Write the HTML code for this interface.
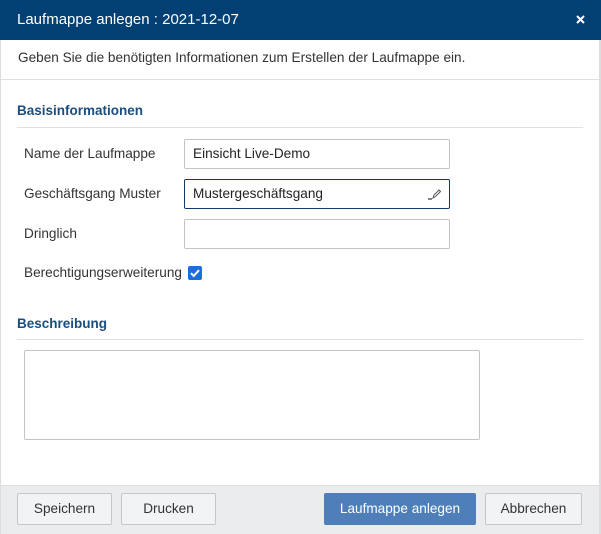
<!DOCTYPE html>
<html><head><meta charset="utf-8"><style>
*{box-sizing:border-box;margin:0;padding:0}
body{width:601px;height:534px;position:relative;background:#fff;font-family:"Liberation Sans",sans-serif;color:#333;overflow:hidden;font-size:13.6px}
.abs{position:absolute}
.hdr{left:0;top:0;width:601px;height:40px;background:#023f73;color:#fff}
.frame{left:0;top:40px;width:601px;height:494px;border-left:1px solid #ddd;border-right:2px solid #ddd}
.lbl{left:24px;line-height:18px}
.inp{left:184px;width:266px;height:30px;border:1px solid #c4c4c4;border-radius:2px;padding-left:8px;line-height:28px;color:#222}
.sec{left:17px;color:#1b4d7e;font-weight:bold;font-size:13.5px}
.line{height:1px;background:#e0e0e0}
.btn{top:493px;height:32px;border:1px solid #c6c6c6;border-radius:2px;background:#f2f3f5;text-align:center;line-height:30px;color:#333}
</style></head><body>
<div class="abs frame"></div>
<div class="abs hdr"><div class="abs" style="left:17px;top:11px;font-size:15px">Laufmappe anlegen : 2021-12-07</div><svg class="abs" style="left:576px;top:15px" width="9" height="9" viewBox="0 0 9 9"><path d="M1 1l7 7M8 1L1 8" stroke="#fff" stroke-width="2"/></svg></div>
<div class="abs" style="left:18px;top:50px">Geben Sie die benötigten Informationen zum Erstellen der Laufmappe ein.</div>
<div class="abs line" style="left:1px;top:79px;width:598px"></div>
<div class="abs sec" style="top:103px">Basisinformationen</div>
<div class="abs line" style="left:17px;top:127px;width:566px"></div>
<div class="abs lbl" style="top:145px">Name der Laufmappe</div>
<div class="abs lbl" style="top:185px">Geschäftsgang Muster</div>
<div class="abs lbl" style="top:225px">Dringlich</div>
<div class="abs lbl" style="top:264px">Berechtigungserweiterung</div>
<div class="abs inp" style="top:139px">Einsicht Live-Demo</div>
<div class="abs inp" style="top:179px;border-color:#0b3c6c">Mustergeschäftsgang<svg class="abs" style="right:8px;top:8px" width="14" height="12" viewBox="0 0 14 12"><path d="M1 11h4" stroke="#333" stroke-width="1.2"/><path d="M6 10l1-3 5-5 1.5 1.5-5 5z" fill="none" stroke="#555" stroke-width="1"/></svg></div>
<div class="abs inp" style="top:219px"></div>
<div class="abs" style="left:188px;top:266px;width:14px;height:14px;background:#1a6fd8;border-radius:2px"><svg width="14" height="14"><path d="M3 7.2l2.7 2.7L11 4.2" fill="none" stroke="#fff" stroke-width="2"/></svg></div>
<div class="abs sec" style="top:316px">Beschreibung</div>
<div class="abs line" style="left:17px;top:339px;width:566px"></div>
<div class="abs" style="left:24px;top:350px;width:456px;height:90px;border:1px solid #c4c4c4;border-radius:2px"></div>
<div class="abs" style="left:1px;top:485px;width:598px;height:49px;background:#ebecee;border-top:1px solid #ddd"></div>
<div class="abs btn" style="left:17px;width:95px">Speichern</div>
<div class="abs btn" style="left:121px;width:95px">Drucken</div>
<div class="abs btn" style="left:324px;width:152px;background:#4f7fb8;border-color:#4f7fb8;color:#fff">Laufmappe anlegen</div>
<div class="abs btn" style="left:485px;width:97px">Abbrechen</div>
</body></html>
